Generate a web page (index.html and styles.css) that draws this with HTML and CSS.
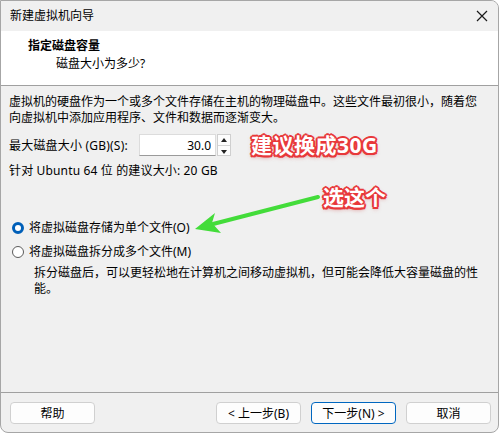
FILE: index.html
```html
<!DOCTYPE html>
<html lang="zh-CN">
<head>
<meta charset="UTF-8">
<title>新建虚拟机向导</title>
<link rel="stylesheet" href="styles.css">
</head>
<body>
<div class="window">
    <div class="titlebar">
        <span class="title">新建虚拟机向导</span>
        <svg class="close" width="12" height="12" viewBox="0 0 12 12">
            <path d="M1 1 L11 11 M11 1 L1 11" stroke="#1a1a1a" stroke-width="1.2" fill="none"/>
        </svg>
    </div>

    <div class="header">
        <div class="header-title">指定磁盘容量</div>
        <div class="header-sub">磁盘大小为多少?</div>
    </div>

    <div class="content">
        <p class="intro">虚拟机的硬盘作为一个或多个文件存储在主机的物理磁盘中。这些文件最初很小，随着您<br>向虚拟机中添加应用程序、文件和数据而逐渐变大。</p>

        <div class="size-row">
            <label for="diskSize">最大磁盘大小 (GB)(S):</label>
            <div class="spin">
                <input id="diskSize" type="text" value="30.0">
                <div class="spin-btns">
                    <span class="spin-up"></span>
                    <span class="spin-down"></span>
                </div>
            </div>
        </div>

        <div class="hint">针对 Ubuntu 64 位 的建议大小: 20 GB</div>

        <div class="options">
            <label class="radio">
                <span class="dot checked"></span>
                将虚拟磁盘存储为单个文件(O)
            </label>
            <label class="radio">
                <span class="dot"></span>
                将虚拟磁盘拆分成多个文件(M)
            </label>
            <p class="note">拆分磁盘后，可以更轻松地在计算机之间移动虚拟机，但可能会降低大容量磁盘的性能。</p>
        </div>
    </div>

    <div class="footer">
        <button class="btn">帮助</button>
        <div class="nav">
            <button class="btn">&lt; 上一步(B)</button>
            <button class="btn primary">下一步(N) &gt;</button>
            <button class="btn">取消</button>
        </div>
    </div>

    <!-- hand-drawn notes on top of the dialog -->
    <div class="mark mark-size">建议换成30G</div>
    <div class="mark mark-pick">选这个</div>
    <svg class="arrow" width="499" height="433" viewBox="0 0 499 433">
        <line x1="318" y1="197" x2="213" y2="224" stroke="#43dc3a" stroke-width="4" stroke-linecap="round"/>
        <polygon points="195,229 215,213 212,223 221,233" fill="#43dc3a"/>
    </svg>
</div>
</body>
</html>
```

FILE: styles.css
```css
body {
    margin: 0;
    font-family: "Noto Sans", "Noto Sans CJK SC", sans-serif;
    font-size: 12px;
    color: #000;
    background: #fff;
}

.window {
    position: relative;
    width: 499px;
    height: 433px;
    box-sizing: border-box;
    display: flex;
    flex-direction: column;
    background: #f0f0f0;
    border: 1px solid #a6a6a6;
    border-radius: 0 8px 8px 8px;
    overflow: hidden;
}

.titlebar {
    height: 30px;
    display: flex;
    align-items: center;
    justify-content: space-between;
    padding: 0 9px 0 9px;
    background: #f0f0f0;
}
.title {
    line-height: 16px;
}
.close {
    margin-right: 1px;
}

.header {
    height: 55px;
    box-sizing: border-box;
    background: #fff;
    border-bottom: 1px solid #a0a0a0;
    padding: 7px 0 0 27px;
}
.header-title {
    font-weight: bold;
    line-height: 16px;
}
.header-sub {
    margin-top: 2px;
    padding-left: 28px;
    line-height: 16px;
}

.content {
    flex: 1;
    padding: 8px 8px 0 8px;
}

.intro {
    margin: 0;
    line-height: 16px;
}

.size-row {
    display: flex;
    align-items: center;
    gap: 5px;
    margin-top: 8px;
    height: 22px;
}
.size-row label {
    width: 125px;
    letter-spacing: 0.2px;
}
.spin {
    display: flex;
    height: 22px;
}
.spin input {
    width: 77px;
    height: 22px;
    box-sizing: border-box;
    border: 1px solid #dcdcdc;
    border-bottom-color: #9a9a9a;
    padding: 0 4px;
    font: inherit;
    text-align: right;
    background: #fff;
    outline: none;
}
.spin-btns {
    width: 14px;
    display: flex;
    flex-direction: column;
    border: 1px solid #cfcfcf;
    background: #fdfdfd;
    box-sizing: border-box;
    margin-left: 1px;
}
.spin-up,
.spin-down {
    flex: 1;
    position: relative;
}
.spin-up {
    border-bottom: 1px solid #d6d6d6;
}
.spin-up::after,
.spin-down::after {
    content: "";
    position: absolute;
    left: 3px;
    top: 3px;
    border-left: 3px solid transparent;
    border-right: 3px solid transparent;
}
.spin-up::after {
    border-bottom: 4px solid #222;
}
.spin-down::after {
    top: 4px;
    border-top: 4px solid #222;
}

.hint {
    margin-top: 7px;
    line-height: 15px;
    letter-spacing: 0.15px;
}

.options {
    margin-top: 42px;
}
.radio {
    display: flex;
    align-items: center;
    gap: 5px;
    line-height: 16px;
    padding-left: 3px;
    margin-bottom: 8px;
}
.dot {
    width: 12px;
    height: 12px;
    box-sizing: border-box;
    border-radius: 50%;
    border: 1px solid #5c5c5c;
    background: #fff;
}
.dot.checked {
    border: 3.5px solid #005fb8;
    background: #fff;
}
.note {
    margin: -3px 0 0 25px;
    line-height: 16px;
}

.footer {
    height: 40px;
    box-sizing: border-box;
    border-top: 1px solid #a0a0a0;
    display: flex;
    justify-content: space-between;
    padding: 9px 7px 0 9px;
}
.nav {
    display: flex;
    gap: 10px;
}
.btn {
    width: 85px;
    height: 22px;
    box-sizing: border-box;
    border: 1px solid #d0d0d0;
    border-radius: 4px;
    background: #fdfdfd;
    font: inherit;
    color: #000;
    padding: 0;
}
.btn.primary {
    border-color: #0067c0;
}

.mark {
    position: absolute;
    font-weight: bold;
    font-size: 21px;
    line-height: 24px;
    color: #fff;
    text-shadow:
        2px 0 0 #e8383a, -2px 0 0 #e8383a, 0 2px 0 #e8383a, 0 -2px 0 #e8383a,
        1.5px 1.5px 0 #e8383a, -1.5px 1.5px 0 #e8383a, 1.5px -1.5px 0 #e8383a, -1.5px -1.5px 0 #e8383a,
        0 2px 4px rgba(200, 60, 60, 0.6);
}
.mark-size {
    left: 250px;
    top: 132px;
    letter-spacing: 0.5px;
}
.mark-pick {
    left: 322px;
    top: 184px;
}

.arrow {
    position: absolute;
    left: -1px;
    top: -1px;
    pointer-events: none;
}
```
